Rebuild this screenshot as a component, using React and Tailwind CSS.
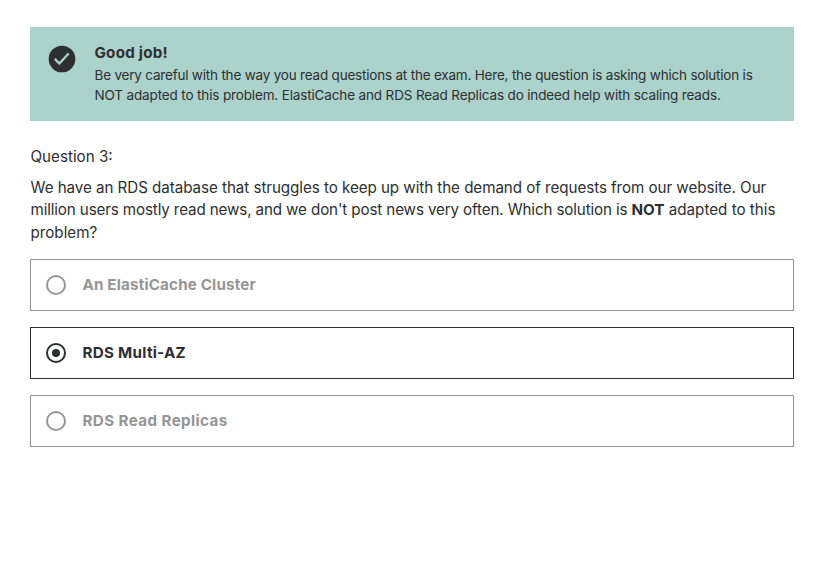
function Check() {
  return (
    <svg className="block h-8 w-8 shrink-0" viewBox="0 0 24 24">
      <circle cx="12" cy="12" r="10" fill="#2d2f31" />
      <path fill="none" stroke="#acd2cc" strokeWidth="1.7" d="M6.6 11.9l3.4 3.5 7-7.5" />
    </svg>
  );
}

function Option({ label, checked, tracking }) {
  return (
    <div className={"flex h-[52px] items-center border pl-[15px] " + (checked ? "border-[#2d2f31] text-[#2d2f31]" : "border-[#969696] text-[#969696]")}>
      <span className="flex h-5 w-5 items-center justify-center rounded-full border-2 border-current">
        {checked && <span className="h-2 w-2 rounded-full bg-current" />}
      </span>
      <span className={"ml-[16.5px] text-[15.2px] font-bold " + tracking}>{label}</span>
    </div>
  );
}

export default function App() {
  return (
    <main className="h-[575px] w-[836px] bg-white pt-[27px] pl-[30px] font-['Inter',sans-serif] text-[#2d2f31]">
      <div className="w-[764px]">
        <section className="flex h-[94px] bg-[#acd2cc] pt-4 pl-4">
          <Check />
          <div className="ml-[16.5px] whitespace-nowrap">
            <h2 className="text-[15.2px] leading-[22px] -mt-px mb-px font-bold tracking-[0.22px]">Good job!</h2>
            <p className="text-[13.5px] leading-5 tracking-[-0.2px]">Be very careful with the way you read questions at the exam. Here, the question is asking which solution is</p>
            <p className="text-[13.5px] leading-5 tracking-[-0.145px]">NOT adapted to this problem. ElastiCache and RDS Read Replicas do indeed help with scaling reads.</p>
          </div>
        </section>
        <p className="mt-6 pl-[0.5px] text-[15.2px] leading-[23px]">Question 3:</p>
        <div className="mt-[9px] pl-[0.5px] text-[15.2px] leading-[22.4px] whitespace-nowrap">
          <p className="tracking-[-0.062px]">We have an RDS database that struggles to keep up with the demand of requests from our website. Our</p>
          <p><span className="tracking-[-0.135px]">million users mostly read news, and we don't post news very often. Which solution is </span><b>NOT</b> adapted to this</p>
          <p>problem?</p>
        </div>
        <div className="mt-[15px] flex flex-col gap-4">
          <Option label="An ElastiCache Cluster" tracking="tracking-[0.16px]" />
          <Option label="RDS Multi-AZ" tracking="tracking-[0.28px]" checked />
          <Option label="RDS Read Replicas" tracking="tracking-[0.39px]" />
        </div>
      </div>
    </main>
  );
}
